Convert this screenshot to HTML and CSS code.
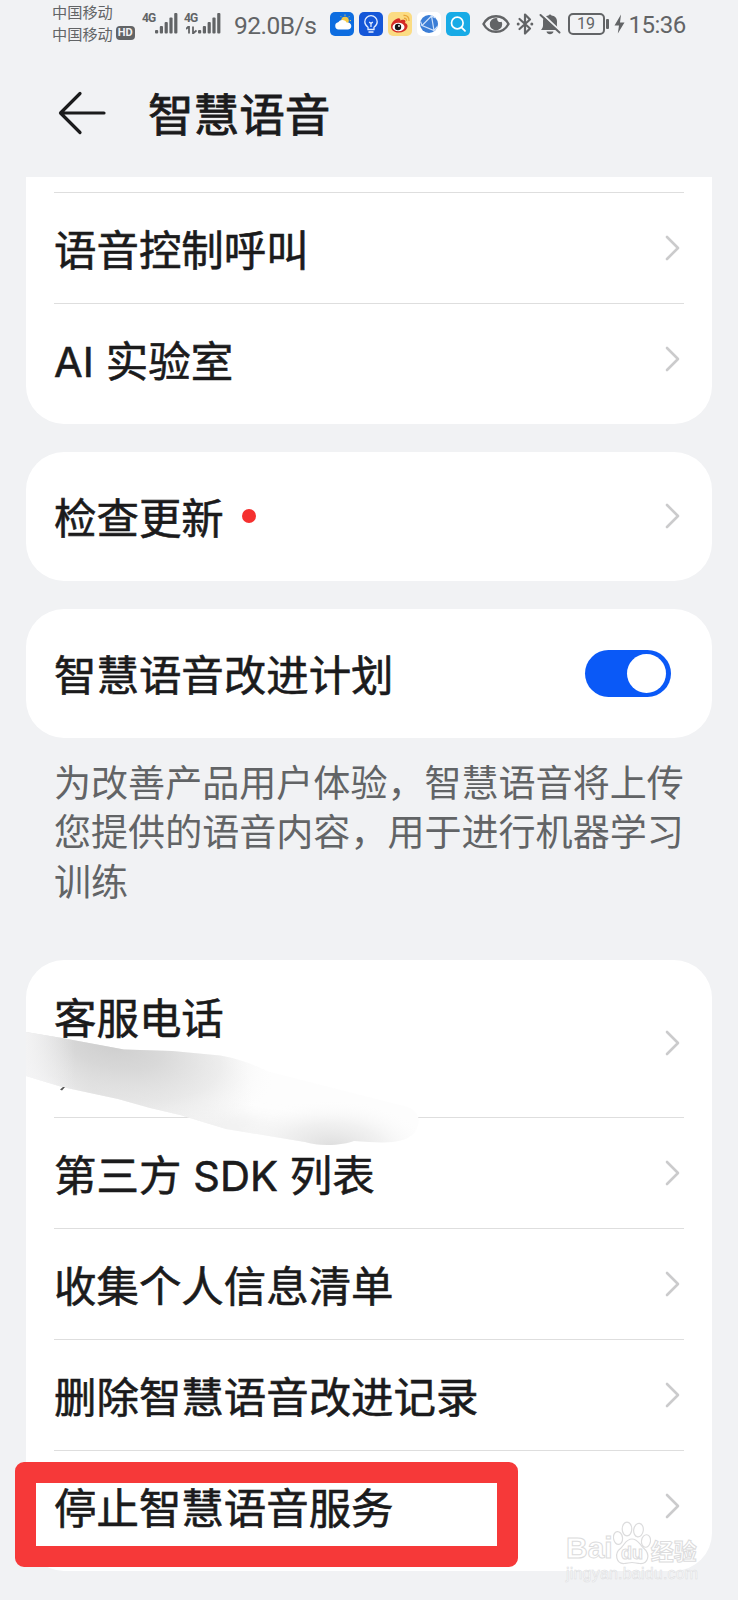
FILE: index.html
```html
<!DOCTYPE html>
<html lang="zh-CN">
<head>
<meta charset="utf-8">
<title>智慧语音</title>
<link rel="stylesheet" href="styles.css">
</head>
<body>
<svg class="defs" width="0" height="0" aria-hidden="true">
  <symbol id="chev" viewBox="0 0 16 28"><path d="M2 3 L13 14 L2 25" fill="none" stroke="#cbcbcc" stroke-width="2.600" stroke-linecap="round" stroke-linejoin="round"/></symbol>
  <symbol id="bars" viewBox="0 0 23 21"><g fill="#626466"><rect x="0" y="17" width="3.2" height="3.6" rx="1"/><rect x="4.800" y="13" width="3.2" height="7.600" rx="1"/><rect x="9.600" y="9" width="3.2" height="11.600" rx="1"/><rect x="14.400" y="4.500" width="3.2" height="16.100" rx="1"/><rect x="19.200" y="0" width="3.2" height="20.600" rx="1"/></g></symbol>
</svg>
<div class="screen">
  <div class="status">
    <div class="carriers">
      <div class="carrier">中国移动</div>
      <div class="carrier">中国移动<span class="hd">HD</span></div>
    </div>
    <div class="signal first"><span class="gen">4G</span><svg class="bars" width="23" height="21"><use href="#bars"/></svg></div>
    <div class="signal second"><span class="gen">4G</span><svg class="bars" width="23" height="21"><use href="#bars"/></svg>
      <svg class="updown" width="11" height="8" viewBox="0 0 11 8"><path d="M0 3 L3 0 V7.5 M7 .5 V7.5 L10.5 4.5" fill="none" stroke="#626466" stroke-width="1.8"/></svg></div>
    <div class="speed">92.0B/s</div>
    <div class="apps">
      <svg width="24" height="24" viewBox="0 0 24 24"><rect width="24" height="24" rx="5" fill="#0d6de0"/><circle cx="15" cy="8.5" r="3.8" fill="#f5c945"/><path d="M15 2.5v1.3M19.3 4.4l-.9.9M21 8.6h-1.2M10.8 4.4l.8.8" stroke="#f5c945" stroke-width="1"/><path d="M8.5 17.5a3.7 3.7 0 0 1-.3-7.3 5 5 0 0 1 8.7.5 3.5 3.5 0 1 1 .2 6.8z" fill="#fff"/></svg>
      <svg width="24" height="24" viewBox="0 0 24 24"><rect width="24" height="24" rx="5" fill="#1557d8"/><path d="M9 17.5v-2.2C6.800 13.800 5.800 12 5.800 9.800a6.200 6.200 0 0 1 12.400 0c0 2.200-1 4-3.200 5.500v2.200zM9.500 20h5M12 15v-3.500M10.200 10l1.800 1.600 1.800-1.600" fill="none" stroke="#e4edff" stroke-width="1.3"/></svg>
      <svg width="24" height="24" viewBox="0 0 24 24"><rect width="24" height="24" rx="5" fill="#fbdc83"/><path d="M3 14.500C3 10 9 5.500 11.500 6.500c1.200.5.8 2 .8 2s4-1.800 5 .2c.5 1-.3 2.300-.3 2.300 5 1.500 2.600 9.500-6.500 9.500C6 20.500 3 18 3 14.500z" fill="#d32b25"/><ellipse cx="10.500" cy="15" rx="6" ry="4.300" fill="#fff"/><circle cx="10" cy="15" r="3.200" fill="#161616"/><circle cx="11" cy="14" r=".9" fill="#fff"/><path d="M15.500 3.500c3.500-.6 6 2 5.500 5.500M16 6.300c1.600-.2 2.700.8 2.500 2.500" fill="none" stroke="#e8a63a" stroke-width="1.300"/></svg>
      <svg width="24" height="24" viewBox="0 0 24 24"><rect width="24" height="24" rx="5" fill="#fff"/><circle cx="12" cy="12" r="9" fill="#3b7ed6"/><path d="M14.500 4L5 13.500 17 18.500zM5 13.500l-1.500-4M17 18.500l3.500-4M14.500 4l4 2" fill="none" stroke="#cfe2fb" stroke-width="1.200"/></svg>
      <svg width="24" height="24" viewBox="0 0 24 24"><rect width="24" height="24" rx="5" fill="#18abe6"/><circle cx="11.300" cy="11" r="5.800" fill="none" stroke="#fff" stroke-width="1.700"/><path d="M15.500 15.300L19 18.800" stroke="#fff" stroke-width="1.800" stroke-linecap="round"/></svg>
    </div>
    <svg class="eye" width="28" height="20" viewBox="0 0 28 20"><path d="M1.500 10C7-.4 21-.4 26.500 10 21 20.400 7 20.400 1.500 10z" fill="none" stroke="#626466" stroke-width="2.400"/><path d="M14 4a6.200 6.200 0 1 0 6.200 6.200 6 6 0 0 0-.6-2.500 3 3 0 0 1-4.300-3.500A6 6 0 0 0 14 4z" fill="#626466"/></svg>
    <svg class="bt" width="18" height="24" viewBox="0 0 18 24"><path d="M3.500 7L14 16.500 9 21.500V2.500L14 7.500 3.500 17" fill="none" stroke="#626466" stroke-width="2.200" stroke-linejoin="round" stroke-linecap="round"/><circle cx="2.200" cy="12" r="1.500" fill="#626466"/><circle cx="15.800" cy="12" r="1.500" fill="#626466"/></svg>
    <svg class="bell" width="22" height="23" viewBox="0 0 22 23"><path d="M2 18C4.500 15.500 4 13 4 9.500c0-4 2.500-5.500 5.500-6a1.600 1.600 0 0 1 3 0c3 .5 5.500 2 5.500 6 0 3.500-.5 6 2 8.500zM7.500 19.500h7c-.5 3.500-6.500 3.500-7 0z" fill="#626466"/><path d="M3 1.800l18 17" stroke="#f1f2f4" stroke-width="2"/><path d="M1.500 3l19 17.500" stroke="#626466" stroke-width="2" stroke-linecap="round"/></svg>
    <div class="battery">19</div>
    <svg class="bolt" width="11" height="20" viewBox="0 0 11 20"><path d="M7 .5L.5 11.500H5L3.800 19.500 10.500 8.500H6z" fill="#626466"/></svg>
    <div class="clock">15:36</div>
  </div>

  <div class="header">
    <svg width="48" height="44" viewBox="0 0 48 44"><path d="M46 22H3M22 2.500L2.500 22 22 41.500" fill="none" stroke="#1b1b1c" stroke-width="3.200" stroke-linecap="round" stroke-linejoin="round"/></svg>
    <h1 class="title">智慧语音</h1>
  </div>

  <div class="card clipped">
    <div class="row"><span class="label">语音控制呼叫</span><svg class="chev"><use href="#chev"/></svg></div>
    <div class="row"><span class="label"><span class="latin">AI</span> 实验室</span><svg class="chev"><use href="#chev"/></svg></div>
  </div>

  <div class="card single">
    <div class="row"><span class="label">检查更新</span><span class="dot"></span><svg class="chev"><use href="#chev"/></svg></div>
  </div>

  <div class="card single">
    <div class="row"><span class="label">智慧语音改进计划</span><span class="switch"><span class="knob"></span></span></div>
  </div>

  <p class="note">为改善产品用户体验，智慧语音将上传<br>您提供的语音内容，用于进行机器学习<br>训练</p>

  <div class="card last">
    <div class="row phone"><span class="label">客服电话</span><svg class="chev"><use href="#chev"/></svg></div>
    <div class="row"><span class="label">第三方 <span class="latin">SDK</span> 列表</span><svg class="chev"><use href="#chev"/></svg></div>
    <div class="row"><span class="label">收集个人信息清单</span><svg class="chev"><use href="#chev"/></svg></div>
    <div class="row"><span class="label">删除智慧语音改进记录</span><svg class="chev"><use href="#chev"/></svg></div>
    <div class="row"><span class="label">停止智慧语音服务</span><svg class="chev"><use href="#chev"/></svg></div>
  </div>

  <svg class="smear" width="440" height="130" viewBox="0 1020 440 130">
    <defs>
      <radialGradient id="g1" gradientUnits="userSpaceOnUse" cx="0" cy="0" r="1" gradientTransform="translate(112 1044) rotate(14) scale(170 78)"><stop offset="0" stop-color="#cecece"/><stop offset=".3" stop-color="#d4d4d4" stop-opacity=".8"/><stop offset=".65" stop-color="#e2e2e2" stop-opacity=".5"/><stop offset="1" stop-color="#fff" stop-opacity="0"/></radialGradient>
      <radialGradient id="g2" gradientUnits="userSpaceOnUse" cx="0" cy="0" r="1" gradientTransform="translate(334 1148) rotate(2) scale(100 50)"><stop offset="0" stop-color="#dcdcdc"/><stop offset=".5" stop-color="#ececec" stop-opacity=".7"/><stop offset="1" stop-color="#fff" stop-opacity="0"/></radialGradient>
      <linearGradient id="g3" gradientUnits="userSpaceOnUse" x1="26" x2="250" y1="1100" y2="1075"><stop offset="0" stop-color="#f4f4f5"/><stop offset=".3" stop-color="#e2e2e2"/><stop offset=".6" stop-color="#ebebeb"/><stop offset="1" stop-color="#fdfdfd"/></linearGradient>
      <linearGradient id="g4" gradientUnits="userSpaceOnUse" x1="20" x2="75" y1="0" y2="0"><stop offset="0" stop-color="#f4f4f5"/><stop offset="1" stop-color="#f4f4f5" stop-opacity="0"/></linearGradient>
      <linearGradient id="g5" gradientUnits="userSpaceOnUse" x1="150" x2="300" y1="0" y2="0"><stop offset="0" stop-color="#eeeeee" stop-opacity="0"/><stop offset=".4" stop-color="#f1f1f1"/><stop offset="1" stop-color="#f5f5f5"/></linearGradient>
      <clipPath id="shape"><path d="M26 1032L62 1038 124 1049.500 172 1051 220 1055.500C240 1059 252 1064 270 1072L400 1105C420 1108 422 1121 415 1132 405 1145 382 1143 354 1141 345 1145 320 1147 305 1142L226 1129 180 1115 150 1108 118 1099 62 1087 26 1076z"/></clipPath>
      <filter id="soft" x="-20%" y="-50%" width="140%" height="200%"><feGaussianBlur stdDeviation="7"/></filter>
    </defs>
    <g clip-path="url(#shape)"><rect y="1020" width="440" height="130" fill="url(#g3)"/><path d="M150 1103L230 1114 330 1128 330 1160 150 1140z" fill="url(#g5)" filter="url(#soft)"/><rect y="1020" width="440" height="130" fill="url(#g1)"/><rect y="1020" width="440" height="130" fill="url(#g2)"/><rect y="1020" width="440" height="130" fill="url(#g4)"/></g>
    <path d="M60 1089.500l3-2.500h2l-3 3.500z" fill="#555"/>
  </svg>

  <div class="highlight"></div>

  <div class="watermark">
    <div class="brand"><span class="bai">Bai</span>
      <svg width="38" height="44" viewBox="0 0 38 44"><g fill="#fff" fill-opacity=".8" stroke="#dcdcdd" stroke-width="1.200"><ellipse cx="5" cy="17" rx="4.500" ry="6.500" transform="rotate(-8 5 17)"/><ellipse cx="14" cy="8" rx="4.800" ry="6.800"/><ellipse cx="25.500" cy="9" rx="4.800" ry="6.800" transform="rotate(8 25 9)"/><ellipse cx="33" cy="20" rx="4.500" ry="6.300" transform="rotate(8 33 20)"/><path d="M19 18c-6 0-7 5-11 9-8 6-4 16 3 15.500 3 0 5-1 8-1s5 1 8 1c8 .5 11-9 3.500-15.500C26 23 25 18 19 18z"/></g><text x="19" y="38" text-anchor="middle" class="du">du</text></svg>
      <span class="jy">经验</span></div>
    <div class="site">jingyan.baidu.com</div>
  </div>
</div>
</body>
</html>
```

FILE: styles.css
```css
* { box-sizing: border-box; }
body {
  margin: 0;
  background: #f1f2f4;
  font-family: "Noto Sans CJK SC", sans-serif;
  color: #1b1b1c;
}
.defs { position: absolute; }
.screen {
  position: relative;
  width: 738px;
  height: 1600px;
  overflow: hidden;
  background: #f1f2f4;
}

/* status bar */
.status {
  display: flex;
  align-items: center;
  height: 47px;
  padding-left: 52px;
  color: #626466;
}
.carriers { width: 90px; flex: none; margin-top: -2px; }
.carrier {
  display: flex;
  align-items: center;
  height: 21.500px;
  font-size: 15.200px;
  line-height: 21.500px;
  white-space: nowrap;
}
.hd {
  width: 19px;
  height: 14px;
  margin-left: 3px;
  border-radius: 4px;
  background: #626466;
  color: #f1f2f4;
  font: 700 11px/14px Roboto, sans-serif;
  text-align: center;
}
.signal { position: relative; flex: none; height: 21px; width: 36px; }
.signal.second { margin-left: 6px; width: 37px; }
.gen {
  position: absolute;
  left: 0;
  top: -1px;
  font: 700 12px/12px Roboto, sans-serif;
  letter-spacing: -.8px;
}
.bars { position: absolute; right: 0; top: 0; }
.updown { position: absolute; left: 2px; top: 13px; }
.speed {
  width: 109px;
  margin-top: 4px;
  padding-left: 13px;
  font: 400 24.500px/30px Roboto, sans-serif;
  letter-spacing: -.5px;
  flex: none;
}
.apps { display: flex; gap: 4.900px; flex: none; }
.eye { flex: none; margin-left: 12px; }
.bt { flex: none; margin-left: 6px; }
.bell { flex: none; margin-left: 5px; }
.battery {
  position: relative;
  flex: none;
  width: 37px;
  height: 22px;
  margin-left: 7px;
  border: 2px solid #626466;
  border-radius: 5px;
  font: 400 16px/18px Roboto, sans-serif;
  text-align: center;
}
.battery::after {
  content: "";
  position: absolute;
  right: -6px;
  top: 4px;
  width: 2.500px;
  height: 10px;
  border-radius: 1px;
  background: #626466;
}
.bolt { flex: none; margin-left: 9px; }
.clock {
  flex: none;
  margin-top: 3px;
  margin-left: 4px;
  font: 400 24px/30px Roboto, sans-serif;
  letter-spacing: -.5px;
}

/* header */
.header {
  display: flex;
  align-items: center;
  height: 130px;
  padding: 0 0 0 58px;
}
.header svg { margin-top: 2px; }
.title {
  margin: 0 0 0 42px;
  font-size: 45.600px;
  line-height: 60px;
  font-weight: 400;
  -webkit-text-stroke: .8px #1b1b1c;
}

/* cards */
.card {
  width: 686px;
  margin: 0 0 28px 26px;
  padding: 9px 28px;
  border-radius: 38px;
  background: #fff;
}
.card.clipped { padding-top: 15px; border-radius: 0 0 38px 38px; height: 247px; }
.card.single { height: 129px; padding-top: 8px; }
.row {
  display: flex;
  align-items: center;
  height: 111px;
  border-top: 1.500px solid transparent;
}
.clipped .row, .last .row + .row { border-top-color: #dedede; }
.label {
  font-size: 42.450px;
  line-height: 56px;
  font-weight: 400;
  -webkit-text-stroke: .6px #1b1b1c;
  white-space: nowrap;
  word-spacing: 2.500px;
}
.single .label { margin-top: -1px; }
.latin { font-family: Inter, sans-serif; font-size: 41.500px; line-height: 1; font-weight: 400; }
.chev { flex: none; width: 16px; height: 28px; margin-left: auto; margin-right: 3px; }
.dot { width: 14px; height: 14px; margin-left: 18px; border-radius: 50%; background: #f5302f; }
.switch {
  display: flex;
  justify-content: flex-end;
  width: 86px;
  height: 47px;
  margin-left: auto;
  margin-right: 13px;
  padding: 4px 5px;
  border-radius: 24px;
  background: #0a59f7;
}
.knob { width: 39px; height: 39px; border-radius: 50%; background: #fff; }
.note {
  margin: -9px 0 0 54px;
  height: 203px;
  font-size: 37.050px;
  line-height: 49.300px;
  color: #626466;
  white-space: nowrap;
}
.card.last { height: 611px; padding-top: 10px; margin-bottom: 0; }
.row.phone { height: 147px; }
.phone .label { margin-top: -57px; }
.phone .chev { margin-top: -2px; }

/* overlays */
.smear { position: absolute; left: 0; top: 1020px; }
.highlight {
  position: absolute;
  left: 15px;
  top: 1462px;
  width: 503px;
  height: 105px;
  border: 21px solid #f63939;
  border-radius: 9px;
}
.watermark { position: absolute; left: 566px; top: 1519px; width: 140px; }
.brand { display: flex; align-items: flex-end; height: 46px; }
.bai, .jy, .du {
  color: #fff;
  fill: #fff;
  stroke: #dcdcdd;
  -webkit-text-stroke: 1px #dcdcdd;
}
.bai { font: 700 30px/34px "Liberation Sans", sans-serif; }
.du { font: 700 18px "Liberation Sans", sans-serif; stroke-width: 1px; }
.jy { font-size: 23px; line-height: 30px; font-weight: 700; }
.site {
  font: 400 16px/18px "Liberation Sans", sans-serif;
  letter-spacing: .2px;
  color: #fbfbfb;
  -webkit-text-stroke: .5px #dcdddf;
  white-space: nowrap;
}
```
